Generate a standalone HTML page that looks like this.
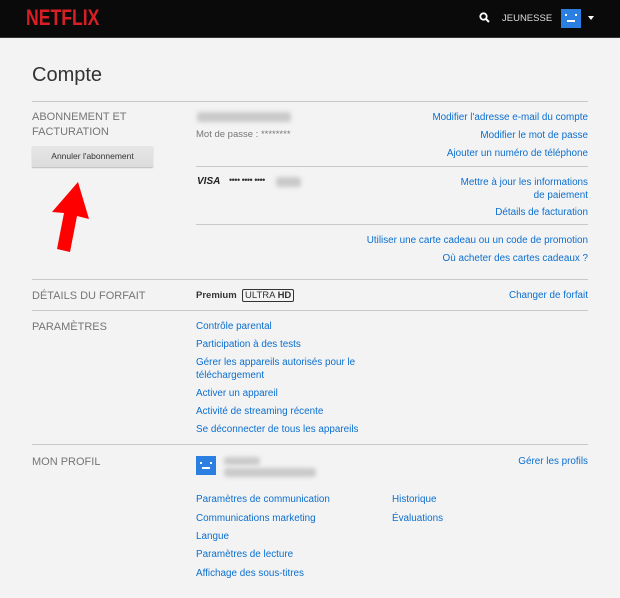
<!DOCTYPE html>
<html><head><meta charset="utf-8"><style>
*{margin:0;padding:0;box-sizing:border-box}
body{width:620px;height:598px;background:#f3f3f3;font-family:"Liberation Sans",sans-serif;position:relative;overflow:hidden}
.hd{position:absolute;left:0;top:0;width:620px;height:38px;background:#0a0a0a;border-bottom:1px solid #333}
.a{position:absolute;font-size:9.9px;color:#0b6fd0;white-space:nowrap}
.r{text-align:right;right:32px}
.g{position:absolute;font-size:11px;color:#757575;white-space:nowrap;line-height:15px}
.ln{position:absolute;height:1px;background:#c8c8c8}
.t{position:absolute;font-size:9.5px;color:#777;white-space:nowrap}
.blur{position:absolute;background:#c9c9c9;filter:blur(2px);border-radius:3px}
.av{position:absolute;background:#2a7fe0}
</style></head><body>
<div class="hd">
<div style="position:absolute;left:26px;top:5px;font-size:22px;font-weight:bold;color:#d81f26;transform:scaleX(0.8);transform-origin:left">NETFLIX</div>
<svg style="position:absolute;left:479px;top:12px" width="11" height="11" viewBox="0 0 11 11"><circle cx="4.5" cy="4.5" r="3.2" stroke="#fff" stroke-width="1.8" fill="none"/><path d="M7 7l3 3" stroke="#fff" stroke-width="2"/></svg>
<div style="position:absolute;left:502px;top:13px;font-size:9.5px;color:#ddd">JEUNESSE</div>
<div class="av" style="left:561px;top:9px;width:20px;height:19px"><div style="position:absolute;left:4px;top:5px;width:2px;height:2px;background:#fff"></div><div style="position:absolute;left:14px;top:5px;width:2px;height:2px;background:#fff"></div><div style="position:absolute;left:6px;top:11px;width:8px;height:2px;background:#fff"></div></div>
<div style="position:absolute;left:588px;top:16px;border:3px solid transparent;border-top:4px solid #fff"></div>
</div>
<div style="position:absolute;left:32px;top:64px;font-size:20px;color:#333">Compte</div>
<div class="ln" style="left:32px;top:101px;width:556px"></div>
<div class="g" style="left:32px;top:110px">ABONNEMENT ET<br>FACTURATION</div>
<div style="position:absolute;left:32px;top:146px;width:121px;height:21px;background:linear-gradient(#e6e6e6,#dcdcdc);box-shadow:0 1px 1px #bbb;font-size:8.5px;color:#333;text-align:center;line-height:20px">Annuler l'abonnement</div>
<svg style="position:absolute;left:0;top:0" width="620" height="598"><polygon points="78,182 89,219 77,216 70,252 57,249 64,213 52,212" fill="#f00"/></svg>
<div class="blur" style="left:197px;top:112px;width:94px;height:10px"></div>
<div class="t" style="left:196px;top:129px">Mot de passe : ********</div>
<div class="a r" style="top:112px">Modifier l'adresse e-mail du compte</div>
<div class="a r" style="top:130px">Modifier le mot de passe</div>
<div class="a r" style="top:148px">Ajouter un numéro de téléphone</div>
<div class="ln" style="left:196px;top:166px;width:392px"></div>
<div style="position:absolute;left:197px;top:176px;font-size:10px;font-weight:bold;font-style:italic;color:#222">VISA</div>
<div style="position:absolute;left:229px;top:175px;font-size:9px;color:#333;letter-spacing:-0.5px">•••• •••• ••••</div>
<div class="blur" style="left:276px;top:177px;width:25px;height:10px"></div>
<div class="a r" style="top:176px;line-height:13px">Mettre à jour les informations<br>de paiement</div>
<div class="a r" style="top:207px">Détails de facturation</div>
<div class="ln" style="left:196px;top:224px;width:392px"></div>
<div class="a r" style="top:235px">Utiliser une carte cadeau ou un code de promotion</div>
<div class="a r" style="top:253px">Où acheter des cartes cadeaux ?</div>
<div class="ln" style="left:32px;top:279px;width:556px"></div>
<div class="g" style="left:32px;top:289px">DÉTAILS DU FORFAIT</div>
<div style="position:absolute;left:196px;top:290px;font-size:9.5px;font-weight:bold;color:#333">Premium</div>
<div style="position:absolute;left:242px;top:289px;border:1px solid #333;border-radius:2px;font-size:9.5px;color:#333;padding:0 2px;line-height:11px">ULTRA <b>HD</b></div>
<div class="a r" style="top:290px">Changer de forfait</div>
<div class="ln" style="left:32px;top:310px;width:556px"></div>
<div class="g" style="left:32px;top:320px">PARAMÈTRES</div>
<div class="a" style="left:196px;top:321px">Contrôle parental</div>
<div class="a" style="left:196px;top:339px">Participation à des tests</div>
<div class="a" style="left:196px;top:357px;line-height:12.5px">Gérer les appareils autorisés pour le<br>téléchargement</div>
<div class="a" style="left:196px;top:388px">Activer un appareil</div>
<div class="a" style="left:196px;top:406px">Activité de streaming récente</div>
<div class="a" style="left:196px;top:424px">Se déconnecter de tous les appareils</div>
<div class="ln" style="left:32px;top:444px;width:556px"></div>
<div class="g" style="left:32px;top:455px">MON PROFIL</div>
<div class="av" style="left:196px;top:456px;width:20px;height:19px"><div style="position:absolute;left:4px;top:6px;width:2px;height:2px;background:#fff"></div><div style="position:absolute;left:14px;top:6px;width:2px;height:2px;background:#fff"></div><div style="position:absolute;left:6px;top:11px;width:8px;height:2px;background:#fff"></div></div>
<div class="blur" style="left:224px;top:457px;width:36px;height:8px"></div>
<div class="blur" style="left:224px;top:468px;width:92px;height:9px"></div>
<div class="a r" style="top:456px">Gérer les profils</div>
<div class="a" style="left:196px;top:494px">Paramètres de communication</div>
<div class="a" style="left:196px;top:513px">Communications marketing</div>
<div class="a" style="left:196px;top:531px">Langue</div>
<div class="a" style="left:196px;top:549px">Paramètres de lecture</div>
<div class="a" style="left:196px;top:568px">Affichage des sous-titres</div>
<div class="a" style="left:392px;top:494px">Historique</div>
<div class="a" style="left:392px;top:513px">Évaluations</div>
</body></html>
